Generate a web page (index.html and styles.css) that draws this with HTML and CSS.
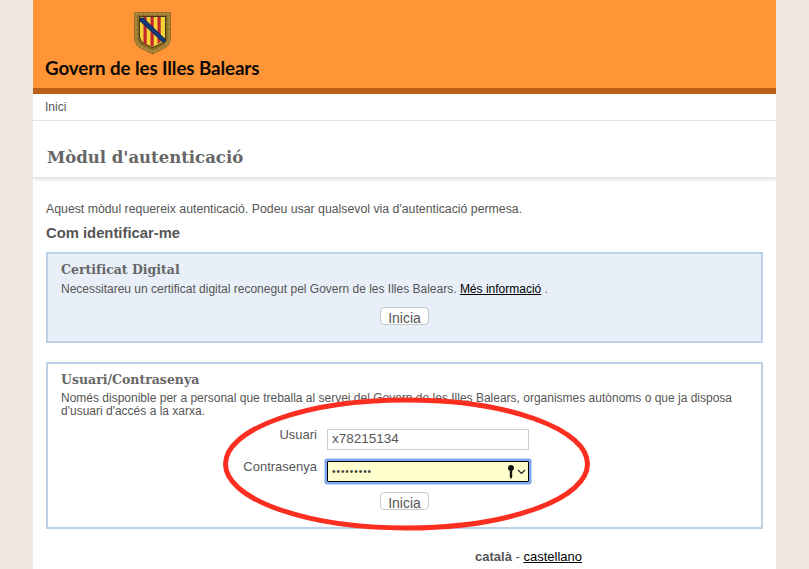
FILE: index.html
```html
<!DOCTYPE html>
<html lang="ca">
<head>
<meta charset="utf-8">
<title>Mòdul d'autenticació</title>
<link rel="stylesheet" href="styles.css">
</head>
<body>
<div class="page">
  <header class="banner">
    <svg class="shield" width="40" height="44" viewBox="0 0 40 44">
      <path d="M3 3H36V26Q36 34 28 37L19.500 41 11 37Q3 34 3 26Z" fill="#8a6a1e" stroke="#76591a" stroke-width="4"/>
      <path d="M3 3H36V26Q36 34 28 37L19.500 41 11 37Q3 34 3 26Z" fill="none" stroke="#a8853a" stroke-width="3.500" stroke-dasharray="1.500 3" stroke-linecap="round"/>
      <path d="M6 5h27v20q0 6-7 9l-6.500 3-6.500-3q-7-3-7-9z" fill="#111" opacity=".55"/>
      <path d="M7 6h25v19q0 5-6 8l-6.500 3-6.500-3q-6-3-6-8z" fill="#f7d33a"/>
      <path d="M10.500 6h3.200v28l-3.200-1.500zM17.500 6h3.200v29.800l-3.200-1zM24.500 6h3.200v25l-3.200 2z" fill="#c1272d"/>
      <path d="M7 7h3.500L33 29l-2.500 3L7 10z" fill="#123a78" stroke="#0b1c3c" stroke-width=".6"/>
    </svg>
    <div class="brand">Govern de les Illes Balears</div>
  </header>
  <nav class="crumbs">Inici</nav>
  <h1 class="title">Mòdul d'autenticació</h1>
  <main class="content">
    <p class="intro">Aquest mòdul requereix autenticació. Podeu usar qualsevol via d'autenticació permesa.</p>
    <h2 class="subtitle">Com identificar-me</h2>
    <section class="box box-cert">
      <h3 class="box-title">Certificat Digital</h3>
      <p class="box-text box-text-cert">Necessitareu un certificat digital reconegut pel Govern de les Illes Balears. <a class="more" href="#">Més informació</a> .</p>
      <div class="actions"><button class="btn" type="button">Inicia</button></div>
    </section>
    <section class="box box-user">
      <h3 class="box-title">Usuari/Contrasenya</h3>
      <p class="box-text">Només disponible per a personal que treballa al servei del Govern de les Illes Balears, organismes autònoms o que ja disposa d'usuari d'accés a la xarxa.</p>
      <form class="login">
        <label class="lbl">Usuari</label>
        <div class="field">x78215134</div>
        <label class="lbl">Contrasenya</label>
        <div class="field field-pass">
          <span class="dots">•••••••••</span>
          <svg class="key" width="21" height="16" viewBox="0 0 21 16">
            <path d="M5 1a3 3 0 0 1 3 3c0 1.500-.8 2.400-1.800 2.800V13L5 15l-1.200-2V6.800C2.800 6.400 2 5.500 2 4a3 3 0 0 1 3-3z" fill="#111"/>
            <path d="M12 6l3.500 3.500L19 6" fill="none" stroke="#222" stroke-width="1.200"/>
          </svg>
        </div>
      </form>
      <div class="actions actions-user"><button class="btn" type="button">Inicia</button></div>
    </section>
    <div class="langs"><b class="lang-on">català</b> - <a class="lang" href="#">castellano</a></div>
  </main>
</div>
<svg class="ring" width="372" height="136" viewBox="0 0 372 136">
  <ellipse cx="185.500" cy="67" rx="181" ry="64" fill="none" stroke="#fb2e1f" stroke-width="5"/>
</svg>
</body>
</html>
```
FILE: styles.css
```css
html, body { margin: 0; height: 100%; }
body {
  background: #efe8e0;
  font-family: "Liberation Sans", Arial, sans-serif;
  color: #555;
  overflow: hidden;
  position: relative;
}
.page { width: 743px; margin-left: 33px; background: #fff; height: 569px; overflow: hidden; }
.banner {
  height: 88px;
  background: #ff9537;
  border-bottom: 6px solid #b95f18;
  display: flex;
  flex-direction: column;
  padding-left: 12px;
}
.shield { margin: 11px 0 0 88px; flex: none; }
.brand {
  font-family: Lato, sans-serif;
  font-weight: 700;
  font-size: 18.750px;
  line-height: 22px;
  margin-top: 2px;
  color: #0d0a05;
  letter-spacing: -.1px;
}
.crumbs {
  height: 26px;
  line-height: 26px;
  font-size: 12px;
  padding-left: 12px;
  border-bottom: 1px solid #e2e2e2;
}
.title {
  margin: 0;
  height: 57px;
  padding: 0 0 0 14px;
  line-height: 73px;
  box-sizing: border-box;
  font-family: "DejaVu Serif", serif;
  font-weight: 700;
  font-size: 16.500px;
  color: #666;
  border-bottom: 1px solid #e4e4e4;
  box-shadow: 0 2px 3px #e6e6e6;
}
.content { padding: 0 13px; }
.intro { margin: 24px 0 0; font-size: 12.300px; line-height: 14px; }
.subtitle { margin: 9px 0 0; font-size: 14.800px; line-height: 16px; font-weight: 700; color: #555; }
.box {
  margin-top: 11px;
  border: 2px solid #bcd0e6;
  box-sizing: border-box;
  padding: 7px 13px 0;
}
.box-cert { background: #e8eff8; height: 91px; }
.box-user { height: 167px; margin-top: 19px; }
.box-title {
  margin: 0;
  font-family: "DejaVu Serif", serif;
  font-weight: 700;
  font-size: 12.500px;
  line-height: 17px;
  color: #666;
}
.box-text { margin: 4px 0 0; font-size: 12px; line-height: 13px; }
.box-text-cert { margin-top: 5px; }
.more { color: #000; text-decoration: underline; }
.actions { display: flex; justify-content: center; margin-top: 11px; }
.actions-user { margin-top: 10px; }
.btn {
  width: 49px;
  height: 18px;
  padding: 2px 0 0;
  font: 14px/16px "Liberation Sans", Arial, sans-serif;
  color: #555;
  background: #fff;
  border: 1px solid #c8c8c8;
  border-radius: 4px;
}
.login {
  display: grid;
  grid-template-columns: 256px 202px;
  column-gap: 10px;
  row-gap: 11px;
  margin-top: 11px;
}
.lbl { text-align: right; font-size: 13px; line-height: 15px; margin-top: -2px; }
.field {
  height: 21px;
  box-sizing: border-box;
  border: 1px solid #ccc;
  padding-left: 4px;
  font-size: 13.500px;
  line-height: 18px;
  color: #555;
}
.field-pass {
  display: flex;
  align-items: center;
  justify-content: space-between;
  border: 1px solid #000;
  background: #ffffcd;
  box-shadow: 0 0 0 2.500px #7ba7ef;
  border-radius: 1px;
  padding: 0 1px 0 4px;
}
.dots { font-size: 10px; letter-spacing: .95px; color: #444; }
.key { flex: none; }
.langs { margin-top: 21px; text-align: right; padding-right: 181px; font-size: 13px; line-height: 14px; }
.lang { color: #000; text-decoration: underline; }
.lang-on { color: #555; }
.ring { position: absolute; left: 221px; top: 397px; }
```
